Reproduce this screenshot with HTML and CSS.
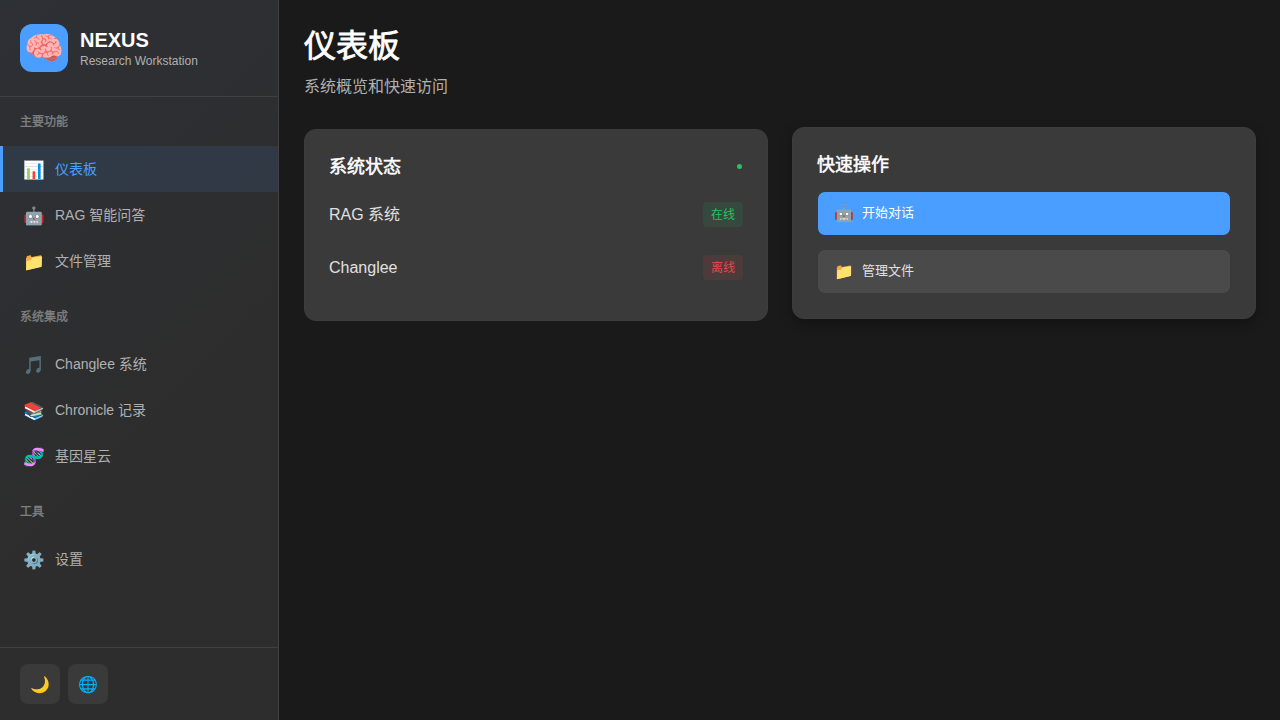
FILE: index.html
```html
<!DOCTYPE html>
<html lang="zh-CN">
<head>
    <meta charset="UTF-8">
    <meta name="viewport" content="width=device-width, initial-scale=1.0">
    <title>NEXUS - 仪表板</title>
    <link rel="stylesheet" href="styles.css">
</head>
<body>
    <aside class="sidebar">
        <div class="brand">
            <div class="brand-logo">🧠</div>
            <div>
                <div class="brand-name">NEXUS</div>
                <div class="brand-sub">Research Workstation</div>
            </div>
        </div>

        <nav class="nav">
            <div class="nav-section">
                <div class="nav-title">主要功能</div>
                <a class="nav-item active"><span class="nav-icon">📊</span><span>仪表板</span></a>
                <a class="nav-item"><span class="nav-icon">🤖</span><span>RAG 智能问答</span></a>
                <a class="nav-item"><span class="nav-icon">📁</span><span>文件管理</span></a>
            </div>
            <div class="nav-section">
                <div class="nav-title">系统集成</div>
                <a class="nav-item"><span class="nav-icon">🎵</span><span>Changlee 系统</span></a>
                <a class="nav-item"><span class="nav-icon">📚</span><span>Chronicle 记录</span></a>
                <a class="nav-item"><span class="nav-icon">🧬</span><span>基因星云</span></a>
            </div>
            <div class="nav-section">
                <div class="nav-title">工具</div>
                <a class="nav-item"><span class="nav-icon">⚙️</span><span>设置</span></a>
            </div>
        </nav>

        <div class="sidebar-footer">
            <button class="icon-btn">🌙</button>
            <button class="icon-btn">🌐</button>
        </div>
    </aside>

    <main class="main">
        <h1 class="page-title">仪表板</h1>
        <p class="page-sub">系统概览和快速访问</p>

        <div class="cards">
            <section class="card">
                <div class="card-head">
                    <h3>系统状态</h3>
                    <span class="dot"></span>
                </div>
                <div class="status-row">
                    <span>RAG 系统</span>
                    <span class="badge online">在线</span>
                </div>
                <div class="status-row">
                    <span>Changlee</span>
                    <span class="badge offline">离线</span>
                </div>
            </section>

            <section class="card card-hover">
                <div class="card-head">
                    <h3>快速操作</h3>
                </div>
                <div class="actions">
                    <button class="action primary"><span class="action-icon">🤖</span><span class="action-text">开始对话</span></button>
                    <button class="action"><span class="action-icon">📁</span><span class="action-text">管理文件</span></button>
                </div>
            </section>
        </div>
    </main>
</body>
</html>
```

FILE: styles.css
```css
* {
    box-sizing: border-box;
}
body {
    font-family: "Liberation Sans", "Noto Sans CJK SC", sans-serif;
    margin: 0;
    height: 720px;
    overflow: hidden;
    display: flex;
    background-color: #1a1a1a;
    color: #ffffff;
}

/* sidebar */
.sidebar {
    width: 279px;
    height: 720px;
    margin-right: 1px;
    flex-shrink: 0;
    display: flex;
    flex-direction: column;
    background: linear-gradient(135deg, #2d3035 0%, #2d2d2d 60%);
    border-right: 1px solid #404040;
}
.brand {
    display: flex;
    align-items: center;
    gap: 12px;
    padding: 24px 20px;
    height: 97px;
    border-bottom: 1px solid #404040;
}
.brand-logo {
    width: 48px;
    height: 48px;
    border-radius: 12px;
    background-color: #4a9eff;
    display: flex;
    align-items: center;
    justify-content: center;
    font-size: 32px;
}
.brand-name {
    font-size: 20px;
    font-weight: bold;
    line-height: 26px;
}
.brand-sub {
    font-size: 12px;
    line-height: 16px;
    color: #b0b0b0;
}
.nav {
    flex: 1;
    padding-top: 16px;
}
.nav-section {
    margin-bottom: 24px;
}
.nav-title {
    font-size: 12px;
    font-weight: normal;
    -webkit-text-stroke: 0.35px #808080;
    line-height: 17px;
    padding: 1px 20px 0;
    margin-bottom: 15px;
    color: #808080;
}
.nav-item {
    display: flex;
    align-items: center;
    gap: 12px;
    height: 46px;
    padding: 0 20px;
    border-left: 3px solid transparent;
    font-size: 14px;
    line-height: 20px;
    color: #b0b0b0;
}
.nav-item.active {
    background-color: rgba(74, 158, 255, 0.1);
    border-left-color: #4a9eff;
    color: #4a9eff;
}
.nav-icon {
    width: 20px;
    margin-top: 1px;
    font-size: 17.5px;
    line-height: 20px;
}
.sidebar-footer {
    display: flex;
    gap: 8px;
    padding: 16px 20px;
    border-top: 1px solid #404040;
}
.icon-btn {
    width: 40px;
    height: 40px;
    padding: 0;
    border: none;
    border-radius: 8px;
    background-color: #3a3a3a;
    font-size: 16px;
    color: #ffffff;
}

/* main */
.main {
    flex: 1;
    padding: 24px;
}
.page-title {
    margin: 0 0 8px;
    font-size: 32px;
    font-weight: normal;
    -webkit-text-stroke: 0.8px #ffffff;
    line-height: 44px;
}
.page-sub {
    margin: 0 0 32px;
    font-size: 16px;
    line-height: 21px;
    color: #b0b0b0;
}
.cards {
    display: grid;
    grid-template-columns: 1fr 1fr;
    gap: 24px;
    align-items: start;
}
.card {
    background-color: #3a3a3a;
    border: 1px solid #3c3c3c;
    border-radius: 12px;
    padding: 24px;
    height: 192px;
}
.card-hover {
    transform: translateY(-2px);
    box-shadow: 0 4px 12px rgba(0, 0, 0, 0.3);
}
.card-head {
    display: flex;
    align-items: center;
    justify-content: space-between;
    height: 26px;
    margin-bottom: 8px;
}
.card-head h3 {
    margin: 0;
    font-size: 18px;
    font-weight: normal;
    -webkit-text-stroke: 0.5px #ffffff;
    line-height: 24px;
}
.dot {
    width: 5px;
    height: 5px;
    border-radius: 50%;
    background-color: #22c55e;
    margin: 0 1px 1px 0;
}
.status-row {
    display: flex;
    align-items: center;
    justify-content: space-between;
    height: 53px;
    font-size: 16px;
    line-height: 22px;
    color: #e0e0e0;
}
.badge {
    font-size: 12px;
    line-height: 17px;
    padding: 5px 8px 3px;
    border-radius: 4px;
}
.badge.online {
    color: #22c55e;
    background-color: rgba(34, 197, 94, 0.1);
}
.badge.offline {
    color: #ef4444;
    background-color: rgba(239, 68, 68, 0.1);
}
.actions {
    margin-top: 13px;
}
.action {
    display: flex;
    align-items: center;
    gap: 8px;
    width: 100%;
    height: 45px;
    margin-bottom: 13px;
    padding: 0 16px;
    border: 1px solid #3a3a3a;
    border-radius: 8px;
    background-color: #4a4a4a;
    font-family: inherit;
    font-size: 13px;
    line-height: 18px;
    color: #e0e0e0;
}
.action.primary {
    background-color: #4a9eff;
    color: #ffffff;
}
.action-icon {
    font-size: 16px;
}
.action-text {
    margin-bottom: 2px;
}
```
